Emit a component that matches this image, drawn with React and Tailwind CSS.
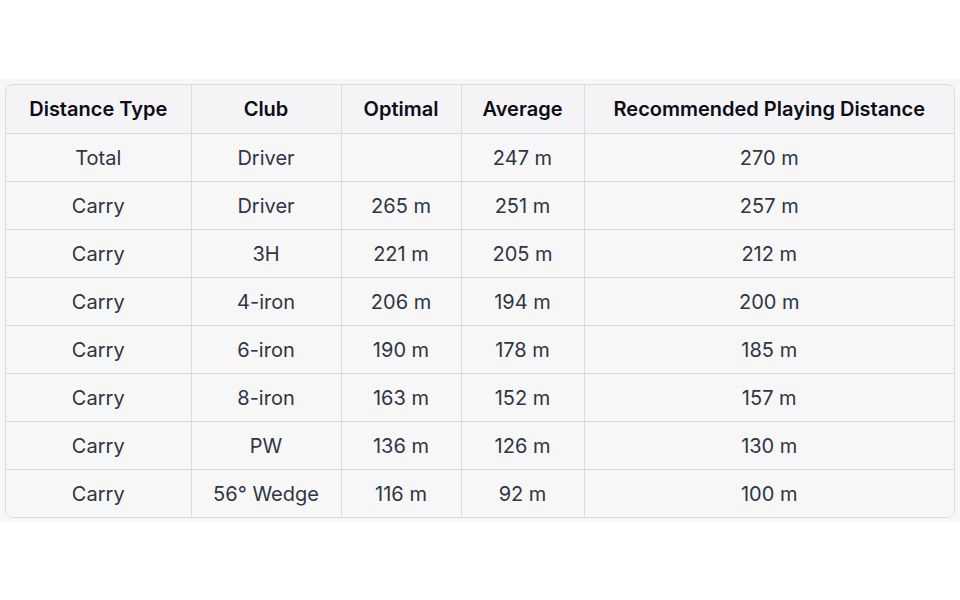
export default function App() {
  const headers = ["Distance Type", "Club", "Optimal", "Average", "Recommended Playing Distance"];
  const widths = ["w-[185px]", "w-[150px]", "w-[120px]", "w-[123px]", "w-auto"];
  const rows = [
    ["Total", "Driver", "", "247 m", "270 m"],
    ["Carry", "Driver", "265 m", "251 m", "257 m"],
    ["Carry", "3H", "221 m", "205 m", "212 m"],
    ["Carry", "4-iron", "206 m", "194 m", "200 m"],
    ["Carry", "6-iron", "190 m", "178 m", "185 m"],
    ["Carry", "8-iron", "163 m", "152 m", "157 m"],
    ["Carry", "PW", "136 m", "126 m", "130 m"],
    ["Carry", "56° Wedge", "116 m", "92 m", "100 m"],
  ];
  return (
    <div className="w-[960px] h-[600px] bg-white pt-[79px]" style={{ fontFamily: "Inter, 'Noto Sans', sans-serif" }}>
      <div className="bg-[#f7f7f8] px-[5px] pt-[5px] pb-[4px]">
        <div className="rounded-[8px] border border-[#dadae3] overflow-hidden">
          <table className="w-full border-collapse table-fixed text-[20px] leading-[24px]">
            <thead>
              <tr className="bg-[#f4f4f6] h-[48px]">
                {headers.map((h, i) => (
                  <th
                    key={i}
                    className={`${widths[i]} font-semibold text-[#0d0d17] text-center ${i < 4 ? "border-r border-[#dadae3]" : ""}`}
                  >
                    {h}
                  </th>
                ))}
              </tr>
            </thead>
            <tbody>
              {rows.map((r, ri) => (
                <tr key={ri} className="h-[48px] border-t border-[#dadae3] bg-[#f7f7f8]">
                  {r.map((c, ci) => (
                    <td
                      key={ci}
                      className={`text-center text-[#2f3542] pt-[2px] ${ci < 4 ? "border-r border-[#dadae3]" : ""}`}
                    >
                      {c}
                    </td>
                  ))}
                </tr>
              ))}
            </tbody>
          </table>
        </div>
      </div>
    </div>
  );
}
